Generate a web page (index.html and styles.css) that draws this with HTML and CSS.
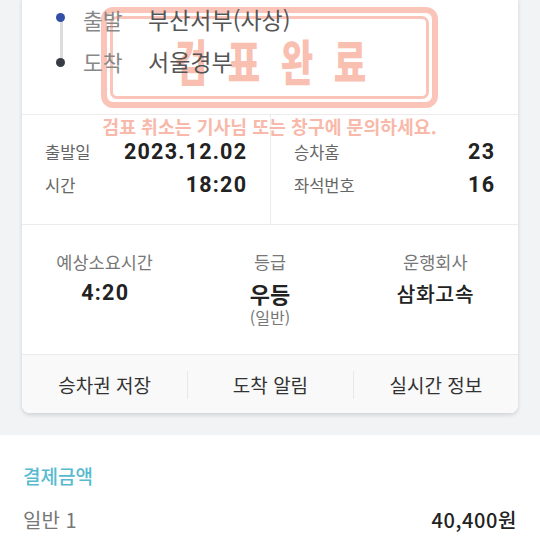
FILE: index.html
```html
<!DOCTYPE html>
<html lang="ko">
<head>
<meta charset="utf-8">
<link rel="stylesheet" href="styles.css">
</head>
<body>
<div class="page">
  <div class="card">
    <div class="route">
      <div class="route-row">
        <span class="dot dot-start"></span>
        <span class="route-label">출발</span>
        <span class="route-value">부산서부(사상)</span>
      </div>
      <div class="route-row">
        <span class="dot dot-end"></span>
        <span class="route-label">도착</span>
        <span class="route-value">서울경부</span>
      </div>
      <span class="route-line"></span>
      <div class="stamp">
        <div class="stamp-box">
          <div class="stamp-inner">
            <span class="stamp-char">검</span>
            <span class="stamp-char">표</span>
            <span class="stamp-char">완</span>
            <span class="stamp-char">료</span>
          </div>
        </div>
        <div class="stamp-caption">검표 취소는 기사님 또는 창구에 문의하세요.</div>
      </div>
    </div>
    <div class="info">
      <div class="info-col">
        <div class="info-row"><span class="info-label">출발일</span><span class="info-value">2023.12.02</span></div>
        <div class="info-row"><span class="info-label">시간</span><span class="info-value">18:20</span></div>
      </div>
      <div class="info-col info-col-right">
        <div class="info-row"><span class="info-label">승차홈</span><span class="info-value">23</span></div>
        <div class="info-row"><span class="info-label">좌석번호</span><span class="info-value">16</span></div>
      </div>
    </div>
    <div class="meta">
      <div class="meta-item">
        <div class="meta-label">예상소요시간</div>
        <div class="meta-value meta-num">4:20</div>
      </div>
      <div class="meta-item">
        <div class="meta-label">등급</div>
        <div class="meta-value meta-bold">우등</div>
        <div class="meta-sub">(일반)</div>
      </div>
      <div class="meta-item">
        <div class="meta-label">운행회사</div>
        <div class="meta-value meta-company">삼화고속</div>
      </div>
    </div>
    <div class="actions">
      <div class="action">승차권 저장</div>
      <div class="action">도착 알림</div>
      <div class="action">실시간 정보</div>
    </div>
  </div>
  <section class="payment">
    <h2 class="payment-title">결제금액</h2>
    <div class="payment-row">
      <span class="payment-label">일반 1</span>
      <span class="payment-amount">40,400원</span>
    </div>
  </section>
</div>
</body>
</html>
```
FILE: styles.css
```css
* { box-sizing: border-box; margin: 0; padding: 0; }
html, body { width: 540px; height: 543px; overflow: hidden; }
body {
  background: #f2f3f5;
  font-family: "Noto Sans CJK KR", "Noto Sans", sans-serif;
  color: #222;
}
.page { margin-top: -2px; }
.card {
  margin: 0 22px;
  background: #fff;
  border-radius: 0 0 8px 8px;
  box-shadow: 0 2px 4px rgba(0,0,0,0.14);
}
.route {
  position: relative;
  padding: 0 0 32px 0;
  border-bottom: 1px solid #ececec;
}
.route-row {
  position: relative;
  z-index: 2;
  display: flex;
  align-items: center;
  height: 42px;
  padding-left: 34px;
}
.dot {
  width: 9px; height: 9px;
  border-radius: 50%;
  margin-right: 18px;
  margin-top: -4px;
}
.dot-start { background: #3350a6; }
.dot-end { background: #363b46; margin-top: 2px; }
.route-line {
  position: absolute;
  left: 37.5px; top: 19px;
  width: 3px; height: 44px;
  background: #dcdcdc;
  z-index: 1;
}
.route-label {
  font-size: 21.5px;
  color: #888;
  width: 65px;
}
.route-value {
  font-size: 23px;
  color: #555;
}
.stamp {
  position: absolute;
  left: 79px; top: 9px;
  width: 337px;
  z-index: 1;
}
.stamp-box {
  height: 101px;
  border: 6px solid #fac5b8;
  border-radius: 12px;
  padding: 3px;
}
.stamp-inner {
  height: 100%;
  border: 3px solid #fac5b8;
  border-radius: 7px;
  display: flex;
  justify-content: center;
  align-items: center;
  gap: 5px;
  padding-left: 2px;
  padding-top: 3px;
}
.stamp-char {
  display: inline-block;
  width: 48px;
  text-align: center;
  font-size: 49px;
  font-weight: 900;
  line-height: 1;
  color: #f9c0b1;
  transform: scaleX(0.72);
}
.stamp-caption {
  margin-top: 7px;
  text-align: center;
  font-size: 18.3px;
  line-height: 22px;
  font-weight: 700;
  color: #f8b9aa;
  white-space: nowrap;
}
.info {
  display: grid;
  grid-template-columns: 1fr 1fr;
  border-bottom: 1px solid #ececec;
}
.info-col { padding: 20px 24px 23px 23px; }
.info-col-right { border-left: 1px solid #ececec; }
.info-row {
  display: flex;
  justify-content: space-between;
  align-items: center;
  height: 33px;
}
.info-label { font-size: 16.5px; color: #666; }
.info-value {
  font-family: "Roboto", "Noto Sans CJK KR", sans-serif;
  font-weight: 700;
  font-size: 21.5px;
  letter-spacing: 1.2px;
  margin-right: -1.2px;
  color: #222;
}
.meta {
  display: grid;
  grid-template-columns: repeat(3, 1fr);
  padding: 25px 0 28px;
  border-bottom: 1px solid #ececec;
}
.meta-item { text-align: center; }
.meta-label { font-size: 17.5px; line-height: 24px; color: #777; }
.meta-value { height: 38px; line-height: 38px; color: #222; }
.meta-num {
  font-family: "Roboto", sans-serif;
  font-weight: 700;
  font-size: 21.5px;
  letter-spacing: 1.2px;
  margin-right: -1.2px;
}
.meta-bold { font-size: 22px; font-weight: 700; }
.meta-company { font-size: 20.5px; font-weight: 500; letter-spacing: 0.5px; }
.meta-sub { font-size: 16px; line-height: 18px; color: #777; margin-top: -4px; }
.actions {
  display: grid;
  grid-template-columns: repeat(3, 1fr);
  align-items: center;
  height: 58px;
  background: #f9f9f9;
  border-radius: 0 0 8px 8px;
}
.action {
  text-align: center;
  font-size: 19px;
  color: #333;
  line-height: 28px;
  margin-top: 2px;
}
.action + .action { border-left: 1px solid #e8e8e8; }
.payment {
  margin-top: 22px;
  background: #fff;
  padding: 28px 23px 0 23px;
  height: 120px;
}
.payment-title {
  font-size: 19px;
  font-weight: 500;
  line-height: 26px;
  color: #56bbcf;
}
.payment-row {
  display: flex;
  justify-content: space-between;
  align-items: center;
  margin-top: 17px;
  height: 26px;
}
.payment-label { font-size: 20px; color: #777; }
.payment-amount { font-size: 20px; font-weight: 500; letter-spacing: 0.6px; color: #222; }
```
